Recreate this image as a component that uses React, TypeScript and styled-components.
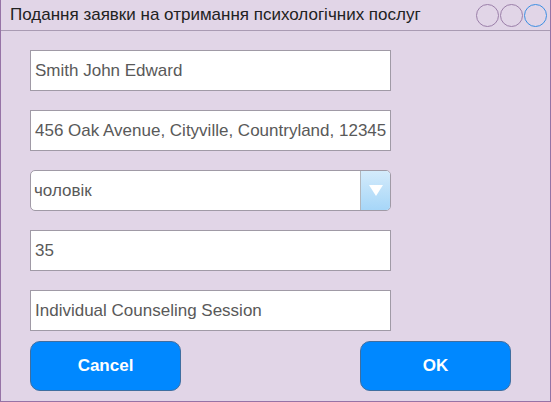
import React from 'react'
import styled, { createGlobalStyle } from 'styled-components'

const GlobalStyle = createGlobalStyle`
  html, body {
    margin: 0;
    padding: 0;
    background: #e1d5e7;
  }
  body {
    font-family: 'Liberation Sans', Arial, sans-serif;
  }
`

const Window = styled.div`
  box-sizing: border-box;
  width: 551px;
  height: 402px;
  background: #e1d5e7;
  border: 1px solid #9673a6;
  border-top: none;
  display: flex;
  flex-direction: column;
`

const TitleBar = styled.div`
  box-sizing: border-box;
  height: 31px;
  border-bottom: 1px solid #a99bb3;
  display: flex;
  align-items: center;
  justify-content: space-between;
  padding: 0 3px 0 9px;
`

const Title = styled.div`
  font-size: 17px;
  color: #222222;
`

const Controls = styled.div`
  display: flex;
  gap: 1px;
  padding-top: 1px;
`

const Circle = styled.div<{ $active?: boolean }>`
  box-sizing: border-box;
  width: 23px;
  height: 23px;
  border-radius: 50%;
  border: 1px solid ${(p) => (p.$active ? '#3c8fe3' : '#9b7fa9')};
`

const Form = styled.div`
  display: flex;
  flex-direction: column;
  gap: 19px;
  padding: 19px 0 0 29px;
`

const Field = styled.div`
  box-sizing: border-box;
  width: 361px;
  height: 41px;
  background: #ffffff;
  border: 1px solid #a09aa6;
  display: flex;
  align-items: center;
  padding-left: 4px;
  font-size: 17px;
  color: #595959;
  white-space: nowrap;
`

const Select = styled(Field)`
  border-radius: 5px;
  padding-left: 0;
  overflow: hidden;
`

const SelectText = styled.div`
  flex: 1;
  padding-left: 3px;
`

const Arrow = styled.div`
  box-sizing: border-box;
  width: 30px;
  height: 100%;
  border-left: 1px solid #b2b6bc;
  background: linear-gradient(#d4ebfb, #a6d6f8);
  display: flex;
  align-items: center;
  justify-content: center;
`

const Buttons = styled.div`
  display: flex;
  justify-content: space-between;
  width: 481px;
  margin-top: -9px;
`

const Button = styled.div`
  box-sizing: border-box;
  width: 151px;
  height: 50px;
  border-radius: 10px;
  background: #0088ff;
  border: 1px solid #3f6ea0;
  color: #ffffff;
  font-weight: 700;
  font-size: 17px;
  display: flex;
  align-items: center;
  justify-content: center;
`

export default function App() {
  return (
    <>
      <GlobalStyle />
      <Window>
        <TitleBar>
          <Title>Подання заявки на отримання психологічних послуг</Title>
          <Controls>
            <Circle />
            <Circle />
            <Circle $active />
          </Controls>
        </TitleBar>
        <Form>
          <Field>Smith John Edward</Field>
          <Field>456 Oak Avenue, Cityville, Countryland, 12345</Field>
          <Select>
            <SelectText>чоловік</SelectText>
            <Arrow>
              <svg width="14" height="11" viewBox="0 0 14 11">
                <path d="M0 0 L14 0 L7 11 Z" fill="#ffffff" />
              </svg>
            </Arrow>
          </Select>
          <Field>35</Field>
          <Field>Individual Counseling Session</Field>
          <Buttons>
            <Button>Cancel</Button>
            <Button>OK</Button>
          </Buttons>
        </Form>
      </Window>
    </>
  )
}
